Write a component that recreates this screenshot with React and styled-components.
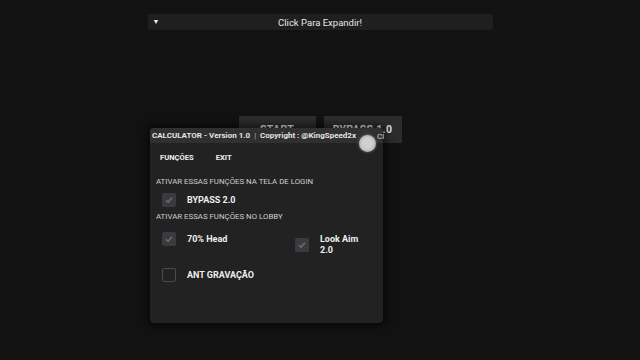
import React from "react";
import styled, { createGlobalStyle } from "styled-components";

const Global = createGlobalStyle`
  html, body { margin: 0; padding: 0; background: #121212; }
  body { font-family: Roboto, "Liberation Sans", sans-serif; }
  * { box-sizing: border-box; }
`;

const Screen = styled.div`
  position: relative;
  width: 640px;
  height: 360px;
  background: #121212;
  overflow: hidden;
  display: flex;
  flex-direction: column;
  align-items: center;
  padding-top: 14px;
`;

const ExpandBar = styled.div`
  width: 345px;
  height: 16px;
  background: #1f1f1f;
  border-radius: 2px;
  display: flex;
  align-items: center;
  position: relative;
  color: #e6e6e6;
  font-size: 9.5px;
  justify-content: center;
`;

const Arrow = styled.span`
  position: absolute;
  left: 5px;
  top: 4px;
  font-size: 7px;
  color: #f0f0f0;
`;

const ButtonRow = styled.div`
  display: flex;
  gap: 8px;
  margin-top: 86px;
`;

const BgButton = styled.div`
  width: ${(p) => p.w}px;
  height: 27px;
  background: #2c2c2c;
  color: #e0e0e0;
  font-size: 10.5px;
  font-weight: 700;
  display: flex;
  align-items: center;
  justify-content: center;
  letter-spacing: 0.3px;
`;

const Window = styled.div`
  position: absolute;
  left: 150px;
  top: 128px;
  width: 233px;
  height: 195px;
  background: #222222;
  border-radius: 4px;
  box-shadow: 0 0 8px 3px rgba(0, 0, 0, 0.55);
  display: flex;
  flex-direction: column;
  overflow: hidden;
`;

const TitleBar = styled.div`
  height: 15px;
  background: #303030;
  color: #e4e4e4;
  font-size: 8px;
  font-weight: 700;
  display: flex;
  align-items: center;
  padding-left: 2px;
  white-space: nowrap;
  gap: 4px;
`;

const Sep = styled.span`
  color: #aaa;
  font-weight: 400;
`;

const Tabs = styled.div`
  display: flex;
  gap: 22px;
  padding: 10px 0 0 10px;
  height: 34px;
`;

const Tab = styled.span`
  color: #f0f0f0;
  font-size: 7.6px;
  font-weight: 700;
`;

const Section = styled.div`
  color: #cfcfcf;
  font-size: 7.85px;
  padding-left: 6px;
  height: ${(p) => p.h}px;
`;

const Grid = styled.div`
  display: grid;
  grid-template-columns: 133px 1fr;
  padding-left: 12px;
`;

const Item = styled.div`
  display: flex;
  align-items: center;
  align-self: start;
  gap: 11px;
  min-height: 14px;
  margin-top: ${(p) => p.mt || 0}px;
  margin-bottom: ${(p) => p.mb || 0}px;
`;

const Box = styled.div`
  width: 14px;
  height: 14px;
  border-radius: 2px;
  background: ${(p) => (p.checked ? "#3b3b3f" : "transparent")};
  border: ${(p) => (p.checked ? "none" : "1.3px solid #4a4a4a")};
  display: flex;
  align-items: center;
  justify-content: center;
  flex-shrink: 0;
`;

const Label = styled.span`
  color: #eeeeee;
  font-size: 9px;
  font-weight: 700;
  line-height: 11px;
`;

const Touch = styled.div`
  position: absolute;
  left: 359px;
  top: 135px;
  width: 17px;
  height: 17px;
  border-radius: 50%;
  background: radial-gradient(circle, #d0d0d0 40%, #9a9a9a 100%);
  box-shadow: 0 0 3px rgba(200, 200, 200, 0.5);
`;

const Peek = styled.span`
  position: absolute;
  left: 377px;
  top: 132px;
  font-size: 8px;
  color: #cfcfcf;
`;

const Check = () => (
  <svg width="10" height="10" viewBox="0 0 10 10">
    <path d="M2 5.2 L4.1 7.2 L8 2.8" fill="none" stroke="#6f6f73" strokeWidth="1.4" />
  </svg>
);

export default function App() {
  return (
    <>
      <Global />
      <Screen>
        <ExpandBar>
          <Arrow>▼</Arrow>
          Click Para Expandir!
        </ExpandBar>
        <ButtonRow>
          <BgButton w={77}>START</BgButton>
          <BgButton w={78}>BYPASS 1.0</BgButton>
        </ButtonRow>
        <Window>
          <TitleBar>
            <span>CALCULATOR - Version 1.0</span>
            <Sep>|</Sep>
            <span>Copyright : @KingSpeed2x</span>
          </TitleBar>
          <Tabs>
            <Tab>FUNÇÕES</Tab>
            <Tab>EXIT</Tab>
          </Tabs>
          <Section h={12}>ATIVAR ESSAS FUNÇÕES NA TELA DE LOGIN</Section>
          <Grid>
            <Item mt={4} mb={5}>
              <Box checked><Check /></Box>
              <Label>BYPASS 2.0</Label>
            </Item>
          </Grid>
          <Section h={20}>ATIVAR ESSAS FUNÇÕES NO LOBBY</Section>
          <Grid>
            <Item mb={22}>
              <Box checked><Check /></Box>
              <Label>70% Head</Label>
            </Item>
            <Item mt={2}>
              <Box checked><Check /></Box>
              <Label>Look Aim<br />2.0</Label>
            </Item>
            <Item>
              <Box />
              <Label>ANT GRAVAÇÃO</Label>
            </Item>
          </Grid>
        </Window>
        <Peek>Cl</Peek>
        <Touch />
      </Screen>
    </>
  );
}
